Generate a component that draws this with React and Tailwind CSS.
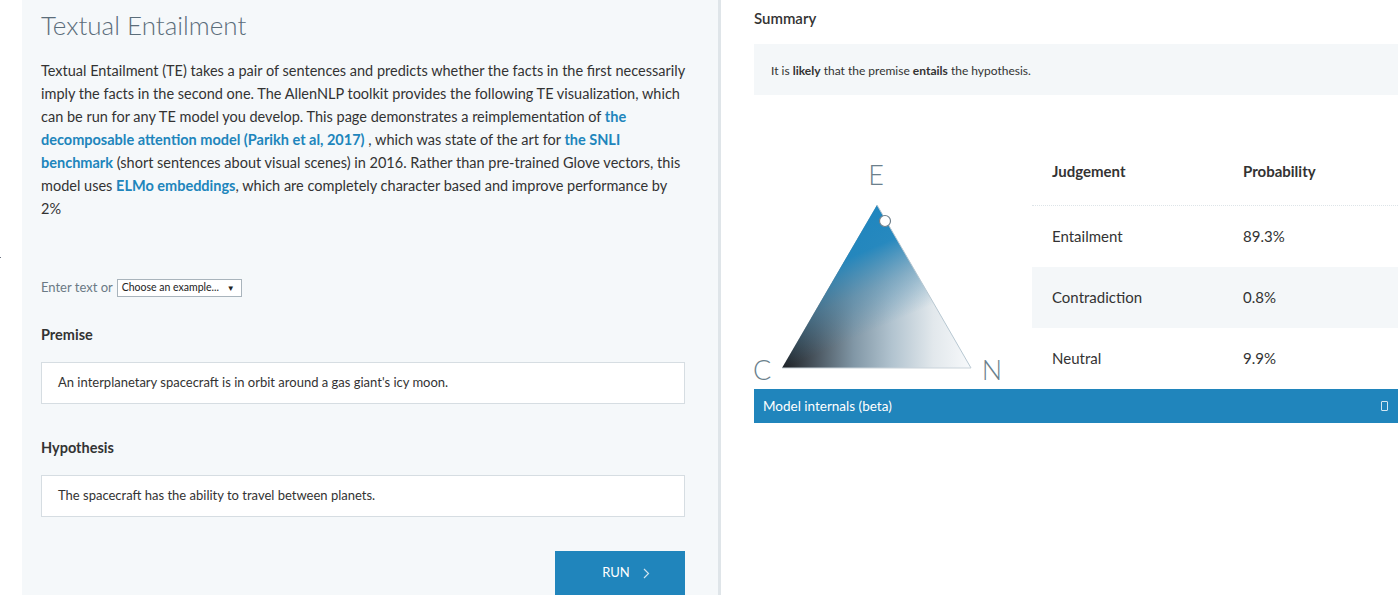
import React from "react";

const font = { fontFamily: "Lato, 'Open Sans', sans-serif" };

function Triangle() {
  return (
    <svg width="278" height="245" viewBox="0 0 278 245">
      <defs>
        <linearGradient id="base" x1="28" y1="0" x2="217" y2="0" gradientUnits="userSpaceOnUse">
          <stop offset="0" stopColor="#1c1f23" />
          <stop offset="0.18" stopColor="#4a5660" />
          <stop offset="0.38" stopColor="#8197a6" />
          <stop offset="0.58" stopColor="#b1c3cf" />
          <stop offset="0.8" stopColor="#e2e8ec" />
          <stop offset="1" stopColor="#f7f9fb" />
        </linearGradient>
        <linearGradient id="blue" x1="110" y1="66" x2="170" y2="206" gradientUnits="userSpaceOnUse">
          <stop offset="0" stopColor="#1f86bf" stopOpacity="1" />
          <stop offset="0.25" stopColor="#2086be" stopOpacity="0.95" />
          <stop offset="0.5" stopColor="#4a8db3" stopOpacity="0.5" />
          <stop offset="0.75" stopColor="#4a8db3" stopOpacity="0" />
        </linearGradient>
      </defs>
      <polygon points="123,61 28,224 217,224" fill="url(#base)" />
      <polygon points="123,61 28,224 217,224" fill="url(#blue)" />
      <line x1="123" y1="61" x2="217" y2="224" stroke="#b7c7d1" strokeWidth="1" />
      <line x1="28" y1="224" x2="217" y2="224" stroke="#c9d3da" strokeWidth="1" />
      <circle cx="131" cy="77" r="5.5" fill="#fff" stroke="#6f7f8a" strokeWidth="1.2" />
      <text x="122" y="41" textAnchor="middle" fontSize="27" fontWeight="300" fill="#6b7f8c" style={font}>E</text>
      <text x="8" y="236" textAnchor="middle" fontSize="27" fontWeight="300" fill="#6b7f8c" style={font}>C</text>
      <text x="238" y="236" textAnchor="middle" fontSize="27" fontWeight="300" fill="#6b7f8c" style={font}>N</text>
    </svg>
  );
}

export default function App() {
  const rows = [
    { j: "Entailment", p: "89.3%", shade: false },
    { j: "Contradiction", p: "0.8%", shade: true },
    { j: "Neutral", p: "9.9%", shade: false },
  ];

  return (
    <div className="h-[595px] w-[1400px] overflow-hidden bg-white flex text-[#333]" style={font}>
      {/* left gutter */}
      <div className="w-[22px] shrink-0 relative">
        <div className="absolute left-0 top-[257px] w-[1px] h-[1px] bg-gray-500" />
      </div>

      {/* left panel */}
      <div className="w-[696px] shrink-0 bg-[#f5f8fa] pl-[19px] pr-[33px] pt-[6px]">
        <h1 className="text-[26px] font-light text-[#5b6d7a] leading-[38px]">Textual Entailment</h1>
        <p className="mt-[15px] text-[14.5px] leading-[23px] w-[660px]">
          Textual Entailment (TE) takes a pair of sentences and predicts whether the facts in the first necessarily<br />
          imply the facts in the second one. The AllenNLP toolkit provides the following TE visualization, which<br />
          can be run for any TE model you develop. This page demonstrates a reimplementation of{" "}
          <a className="font-bold text-[#2085bc]">the</a><br />
          <a className="font-bold text-[#2085bc]">decomposable attention model (Parikh et al, 2017)</a> , which was state of the art for{" "}
          <a className="font-bold text-[#2085bc]">the SNLI</a><br />
          <a className="font-bold text-[#2085bc]">benchmark</a> (short sentences about visual scenes) in 2016. Rather than pre-trained Glove vectors, this<br />
          model uses <a className="font-bold text-[#2085bc]">ELMo embeddings</a>, which are completely character based and improve performance by<br />
          2%
        </p>

        <div className="mt-[59px] flex items-center gap-[4px] h-[18px]">
          <span className="text-[13px] text-[#6b7a85]">Enter text or</span>
          <div className="w-[125px] h-[18px] border border-[#a9b4bc] bg-white flex items-center justify-between pl-[4px] pr-[6px] text-[10.5px] text-[#222]">
            <span>Choose an example...</span>
            <span className="text-[8px]">▼</span>
          </div>
        </div>

        <div className="mt-[28px] text-[14.5px] font-bold text-[#333] leading-[20px]">Premise</div>
        <div className="mt-[17px] h-[42px] bg-white border border-[#d6dde2] flex items-center pl-[16px] text-[13px]">
          An interplanetary spacecraft is in orbit around a gas giant's icy moon.
        </div>

        <div className="mt-[34px] text-[14.5px] font-bold text-[#333] leading-[20px]">Hypothesis</div>
        <div className="mt-[17px] h-[42px] bg-white border border-[#d6dde2] flex items-center pl-[16px] text-[13px]">
          The spacecraft has the ability to travel between planets.
        </div>

        <div className="mt-[34px] flex justify-end">
          <button className="w-[130px] h-[44px] bg-[#2085bc] text-white text-[13px] flex items-center justify-center gap-[13px] pl-[12px]">
            <span>RUN</span>
            <svg width="7" height="11" viewBox="0 0 7 11" fill="none" stroke="#cfe3ef" strokeWidth="1.2">
              <path d="M1 1l4.5 4.5L1 10" />
            </svg>
          </button>
        </div>
      </div>

      {/* divider */}
      <div className="w-[3px] shrink-0 bg-[#dfe5e9]" />

      {/* right panel */}
      <div className="flex-1 pl-[33px] pr-[2px] pt-[8px]">
        <div className="text-[15px] font-semibold leading-[20px] text-[#333]">Summary</div>
        <div className="mt-[16px] h-[51px] bg-[#f4f7f9] flex items-center pl-[17px] pt-[3px] text-[12px]">
          <span>
            It is <b>likely</b> that the premise <b>entails</b> the hypothesis.
          </span>
        </div>

        <div className="mt-[49px] flex">
          <div className="w-[278px] shrink-0">
            <Triangle />
          </div>
          <div className="flex-1 text-[15px]">
            <div className="h-[62px] pb-[6px] flex items-center font-bold border-b border-dotted border-[#dde4e8]">
              <div className="w-[211px] pl-[20px]">Judgement</div>
              <div>Probability</div>
            </div>
            {rows.map((r) => (
              <div
                key={r.j}
                className={`h-[61px] flex items-center ${r.shade ? "bg-[#f4f7f9]" : "bg-white"}`}
              >
                <div className="w-[211px] pl-[20px]">{r.j}</div>
                <div>{r.p}</div>
              </div>
            ))}
          </div>
        </div>

        <div className="h-[34px] bg-[#2085bc] text-white text-[13.5px] flex items-center justify-between pl-[9px] pr-[10px]">
          <span>Model internals (beta)</span>
          <span className="w-[7px] h-[10px] border border-white/80 rounded-[1px]" />
        </div>
      </div>
    </div>
  );
}
